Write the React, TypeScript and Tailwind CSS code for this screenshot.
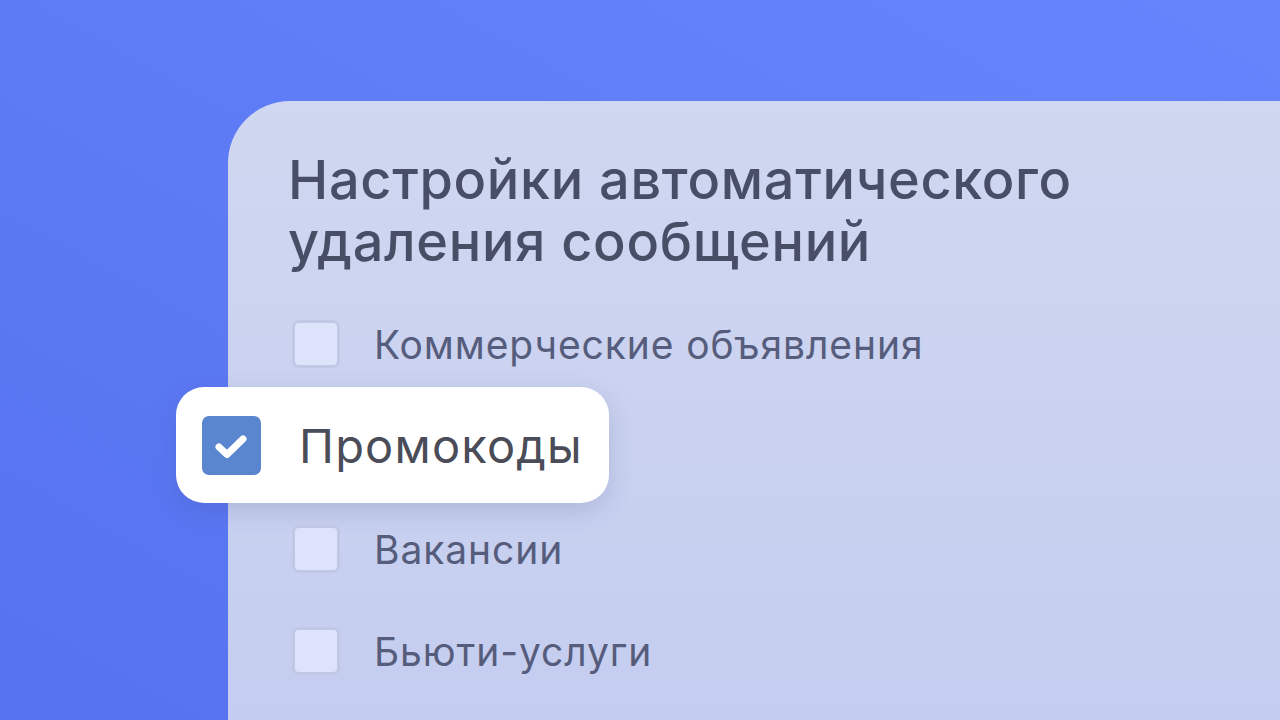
const Box = () => (
  <div className="w-12 h-12 shrink-0 rounded-[7px] border-[3px] border-[#c1c8e6] bg-[#dde3fb]" />
);

const Row = ({ label }: { label: string }) => (
  <div className="flex items-center h-12 gap-[34px] pl-[64px]">
    <Box />
    <span className="text-[39px] text-[#565d7c] tracking-[0.9px] leading-none">{label}</span>
  </div>
);

export default function App() {
  return (
    <div
      className="w-[1280px] h-[720px] overflow-hidden bg-gradient-to-tr from-[#5672ef] to-[#6685fd] pt-[101px] pl-[228px]"
      style={{ fontFamily: 'Inter, "Noto Sans", sans-serif' }}
    >
      <div className="h-[700px] rounded-tl-[62px] bg-gradient-to-b from-[#d0d7f0] to-[#c3ccf0] pt-[48px]">
        <h1 className="pl-[60px] text-[54px] leading-[62px] font-medium text-[#484e66] tracking-[0.7px]">
          Настройки автоматического
          <br />
          удаления сообщений
        </h1>
        <div className="mt-[47px] flex flex-col">
          <Row label="Коммерческие объявления" />
          <div className="-ml-[52px] mt-[19px] w-[433px] h-[116px] rounded-[28px] bg-white shadow-[0_8px_24px_rgba(60,70,130,0.18)] flex items-center pl-[26px] gap-[38px]">
            <div className="w-[59px] h-[59px] rounded-[7px] bg-[#5a86d0] flex items-center justify-center">
              <svg width="59" height="59" viewBox="0 0 59 59">
                <path d="M17 31 L25 38.5 L41 23" fill="none" stroke="white" strokeWidth="7" strokeLinecap="round" strokeLinejoin="round" />
              </svg>
            </div>
            <span className="text-[47px] text-[#4a4c58] tracking-[1.2px] leading-none">Промокоды</span>
          </div>
          <div className="mt-[22px] flex flex-col gap-[54px]">
            <Row label="Вакансии" />
            <Row label="Бьюти-услуги" />
          </div>
        </div>
      </div>
    </div>
  );
}
